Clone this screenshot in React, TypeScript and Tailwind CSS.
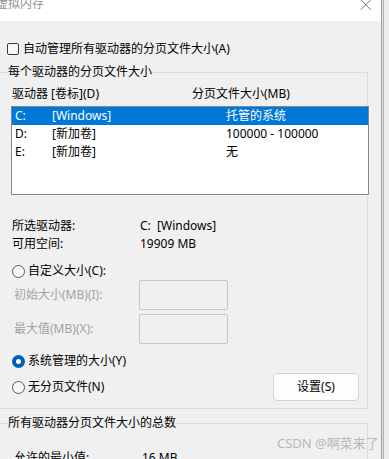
function Radio({ checked }: { checked?: boolean }) {
  if (checked) {
    return (
      <span className="w-[13px] h-[13px] rounded-full bg-[#005fb8] flex items-center justify-center shrink-0">
        <span className="w-[5px] h-[5px] rounded-full bg-white" />
      </span>
    );
  }
  return <span className="w-[13px] h-[13px] rounded-full border border-[#5a5a5a] bg-[#f7f7f7] shrink-0" />;
}

const drives = [
  { d: "C:", label: "[Windows]", size: "托管的系统", selected: true },
  { d: "D:", label: "[新加卷]", size: "100000 - 100000" },
  { d: "E:", label: "[新加卷]", size: "无" },
];

export default function App() {
  return (
    <div className="relative w-[389px] h-[459px] overflow-hidden bg-[#f0f0f0] flex text-[12px] leading-[16px] text-black font-['Noto_Sans','Noto_Sans_CJK_SC',sans-serif]">
      <div className="w-[381px] shrink-0 flex flex-col">
        {/* title bar */}
        <div className="h-[21px] bg-white flex items-start justify-between shrink-0">
          <span className="-ml-[4px] -mt-[4px] text-[#8f8f8f]">虚拟内存</span>
          <svg width="12" height="12" viewBox="0 0 12 12" className="-mt-[1px] mr-[9px]">
            <path d="M0.5 0.5 L11 11 M11 0.5 L0.5 11" stroke="#7a7a7a" strokeWidth="1" fill="none" />
          </svg>
        </div>

        {/* auto manage */}
        <div className="mt-[21px] h-[14px] flex items-center pl-[7px]">
          <span className="w-[12px] h-[12px] rounded-[2px] border border-[#3c3c3c] bg-[#f7f7f7]" />
          <span className="ml-[4px]">自动管理所有驱动器的分页文件大小(A)</span>
        </div>

        {/* group 1 */}
        <div className="relative mt-[16px] -ml-[4px] w-[372px] h-[337px] shrink-0 border border-[#dcdcdc] flex flex-col">
          <span className="absolute -top-[9px] left-[11px] bg-[#f0f0f0]">每个驱动器的分页文件大小</span>

          <div className="mt-[13px] h-[16px] pl-[15px] flex">
            <span className="w-[180px]">驱动器 [卷标](D)</span>
            <span>分页文件大小(MB)</span>
          </div>

          <div className="mt-[4px] ml-[14px] w-[358px] h-[89px] border border-[#828790] bg-white">
            {drives.map((r) => (
              <div
                key={r.d}
                className={`h-[18px] flex items-center pl-[3px] ${r.selected ? "bg-[#0078d7] text-white" : ""}`}
              >
                <span className="w-[37px]">{r.d}</span>
                <span className="w-[174px]">{r.label}</span>
                <span>{r.size}</span>
              </div>
            ))}
          </div>

          <div className="mt-[23px] h-[16px] pl-[15px] flex">
            <span className="w-[128px]">所选驱动器:</span>
            <span>C:&nbsp; [Windows]</span>
          </div>
          <div className="mt-[2px] h-[16px] pl-[15px] flex">
            <span className="w-[128px]">可用空间:</span>
            <span>19909 MB</span>
          </div>

          <div className="mt-[11px] h-[16px] pl-[15px] flex items-center">
            <Radio />
            <span className="ml-[3px]">自定义大小(C):</span>
          </div>

          <div className="mt-[1px] h-[30px] pl-[17px] flex items-center">
            <span className="w-[125px] text-[#a3a3a3]">初始大小(MB)(I):</span>
            <span className="w-[89px] h-[30px] border border-[#c6c6c6] rounded-[2px]" />
          </div>
          <div className="mt-[4px] h-[30px] pl-[17px] flex items-center">
            <span className="w-[125px] text-[#a3a3a3]">最大值(MB)(X):</span>
            <span className="w-[89px] h-[30px] border border-[#c6c6c6] rounded-[2px]" />
          </div>

          <div className="mt-[9px] h-[16px] pl-[15px] flex items-center">
            <Radio checked />
            <span className="ml-[3px]">系统管理的大小(Y)</span>
          </div>

          <div className="mt-[4px] h-[28px] pl-[15px] pr-[8px] flex items-center">
            <Radio />
            <span className="ml-[3px]">无分页文件(N)</span>
            <button className="ml-auto w-[86px] h-[28px] rounded-[4px] border border-[#d0d0d0] bg-[#fdfdfd]">
              设置(S)
            </button>
          </div>
        </div>

        {/* group 2 */}
        <div className="relative mt-[14px] -ml-[4px] w-[372px] h-[80px] shrink-0 border border-[#dcdcdc] flex flex-col">
          <span className="absolute -top-[9px] left-[11px] bg-[#f0f0f0]">所有驱动器分页文件大小的总数</span>
          <div className="mt-[26px] h-[16px] pl-[17px] flex">
            <span className="w-[128px]">允许的最小值:</span>
            <span>16 MB</span>
          </div>
        </div>
      </div>

      {/* window edge */}
      <div className="flex shrink-0">
        <div className="w-[1px] bg-[#9c9c9c]" />
        <div className="w-[1px] bg-[#e4e4e4]" />
        <div className="w-[1px] bg-[#b0b0b0]" />
        <div className="w-[5px] bg-[#ececec]" />
      </div>

      <span className="absolute left-[277px] top-[435px] text-[13px] text-[#b8b8b8]">CSDN @啊菜来了</span>
    </div>
  );
}
